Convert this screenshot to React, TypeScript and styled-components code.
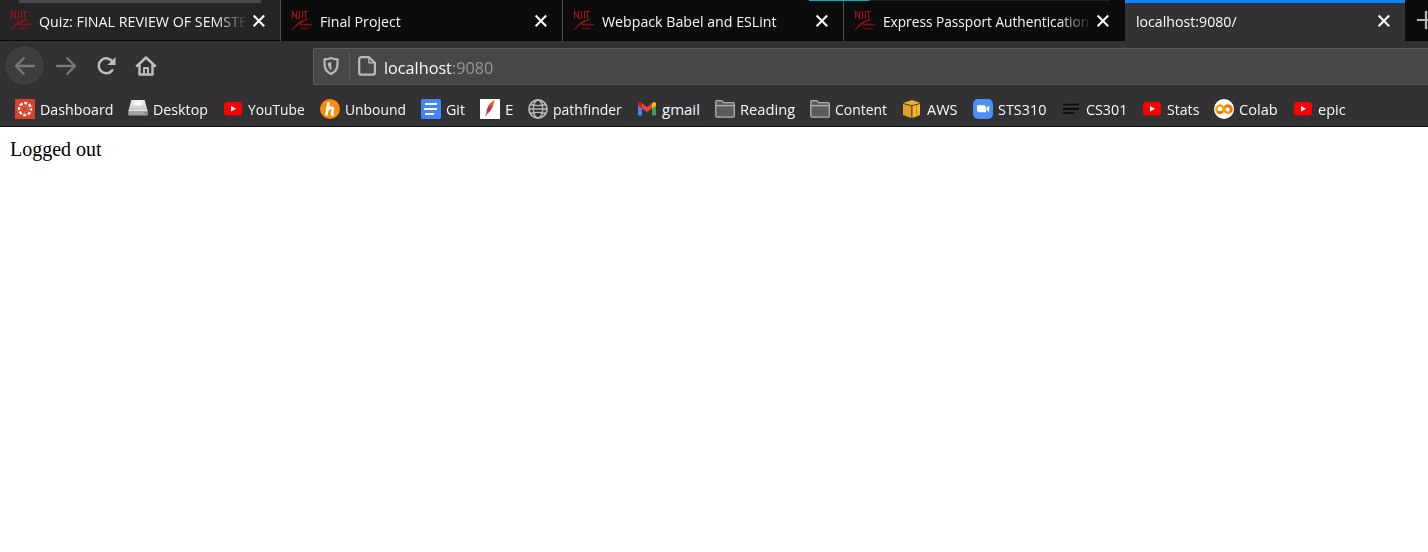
import React, { useLayoutEffect, useRef, useState } from 'react';
import styled, { createGlobalStyle } from 'styled-components';

const GlobalStyle = createGlobalStyle`
  * { box-sizing: border-box; }
  html, body { margin: 0; background: #fff; overflow: hidden; }
  svg { display: block; flex: none; }
`;

const Browser = styled.div`
  width: 1428px;
  height: 552px;
  display: flex;
  flex-direction: column;
  overflow: hidden;
  background: #fff;
  font-family: 'Open Sans', 'Noto Sans', sans-serif;
  color: #f9f9fa;
`;

const TabStrip = styled.div`
  display: flex;
  height: 41px;
  background: #0c0c0d;
`;

const Tab = styled.div<{ $state?: 'hover' | 'active'; $width: number }>`
  position: relative;
  flex: none;
  display: flex;
  align-items: center;
  width: ${p => p.$width}px;
  height: 41px;
  padding: 1px 14px 0 ${p => (p.$state === 'active' ? 11 : 10)}px;
  font-size: 15px;
  background: ${p => (p.$state === 'active' ? '#323234' : p.$state === 'hover' ? '#252526' : '#0c0c0d')};
  border-right: ${p => (p.$state === 'active' ? 'none' : '1px solid #515153')};
  box-shadow: ${p => (p.$state === 'active' ? 'none' : 'inset 0 -1px #080809')};
  &:nth-child(4) { border-right: none; padding-right: 15px; }
`;

const Accent = styled.div<{ $left: number; $width: number; $height: number; $color: string }>`
  position: absolute;
  z-index: 1;
  top: 0;
  left: ${p => p.$left}px;
  width: ${p => p.$width}px;
  height: ${p => p.$height}px;
  background: ${p => p.$color};
`;

const TabTitle = styled.div<{ $fade?: boolean }>`
  flex: 1;
  min-width: 0;
  height: 22px;
  line-height: 22px;
  margin-right: 4px;
  ${p => p.$fade && 'mask-image: linear-gradient(to left, transparent 0, #000 34px);'}
`;

const Favicon = styled.span`
  display: flex;
  width: 22px;
  margin-right: 7px;
`;

const CloseBox = styled.span`
  display: flex;
  width: 14px;
  flex: none;
`;

const NewTab = styled.div`
  flex: 1;
  min-width: 0;
  overflow: hidden;
  padding: 11px 0 0 12px;
  box-shadow: inset 0 -1px #080809;
`;

const Toolbar = styled.div`
  display: flex;
  align-items: center;
  height: 51px;
  padding: 0 0 2px 4px;
  background: #323234;
`;

const BackButton = styled.div`
  display: flex;
  align-items: center;
  justify-content: center;
  width: 41px;
  height: 41px;
  border-radius: 50%;
  background: #3e3e40;
  border: 1px solid #2d2d2f;
`;

const ToolIcon = styled.div<{ $gap: number }>`
  margin-left: ${p => p.$gap}px;
`;

const AddressBar = styled.div`
  display: flex;
  align-items: center;
  flex: 1;
  height: 37px;
  margin: 1px 0 0 156px;
  padding: 0 0 0 8px;
  background: #474749;
  border: 1px solid #5c5c5e;
  border-right: none;
  border-radius: 2px 0 0 2px;
  font-size: 16.5px;
`;

const Divider = styled.div`
  width: 1px;
  height: 26px;
  margin: 0 8px 0 9px;
  background: #5d5d68;
`;

const Address = styled.div`
  margin: 3px 0 0 8px;
  line-height: 22px;
`;

const Port = styled.span`
  color: #98989a;
`;

const Bookmarks = styled.div`
  display: flex;
  align-items: center;
  gap: 15px;
  height: 35px;
  padding: 0 0 1px 15px;
  border-bottom: 1px solid #0c0c0d;
  background: #323234;
  font-size: 15px;
`;

const Bookmark = styled.div`
  display: flex;
  align-items: center;
  gap: 5px;
  height: 20px;
  line-height: 20px;
`;

const Page = styled.main`
  flex: 1;
  padding: 11px 10px;
  background: #fff;
  color: #000;
  font: 20px/23px 'Liberation Serif', serif;
`;

const LabelBox = styled.span<{ $width: number }>`
  display: block;
  flex: none;
  width: ${p => p.$width}px;
  white-space: nowrap;
`;

const LabelText = styled.span`
  display: inline-block;
  transform-origin: 0 50%;
`;

/* Condenses a label so it occupies exactly the given advance width. */
function Label({ width, children }: { width: number; children: React.ReactNode }) {
  const ref = useRef<HTMLSpanElement>(null);
  const [scale, setScale] = useState(1);
  useLayoutEffect(() => {
    if (ref.current) setScale(width / ref.current.offsetWidth);
  }, [width]);
  return (
    <LabelBox $width={width}>
      <LabelText ref={ref} style={{ transform: `scaleX(${scale})` }}>{children}</LabelText>
    </LabelBox>
  );
}

const Njit = () => (
  <svg width="22" height="22" viewBox="0 0 22 22" fill="none" stroke="#a01218">
    <path d="M1.500 8.500V1.500L5.500 8V1M8.500 1v6c0 1.200-.7 1.500-1.700 1.500M11.500 1v7.500M14.500 1v7.500M12.500 1.500h4.500" strokeWidth="1.100" />
    <path d="M1 20C5 15 9 10 17 9.500 11 11 6 15 1 20Z" fill="#a01218" strokeWidth=".7" />
    <path d="M9 14.700h12" strokeWidth="1.700" opacity=".8" strokeDasharray="3 .4" />
    <path d="M9.500 18.500h8" strokeWidth="1.600" opacity=".75" strokeDasharray="2 .5" />
  </svg>
);

const Close = () => (
  <CloseBox>
    <svg width="14" height="14" viewBox="0 0 14 14">
      <path d="m1.600 1.600 10.600 10.600m0-10.600L1.600 12.200" stroke="#f9f9fa" strokeWidth="2.100" />
    </svg>
  </CloseBox>
);

const YouTube = () => (
  <svg width="20" height="20"><rect x="1" y="3" width="18" height="13.500" rx="3" fill="#f00" /><path d="m8 7 5 2.800L8 12.600z" fill="#fff" /></svg>
);

const Folder = () => (
  <svg width="20" height="20" fill="#5b5b5d" stroke="#b0b0b2" strokeWidth="1.300" strokeLinejoin="round">
    <path d="M.8 17V3Q.8 1.700 2 1.700h4.800l2 2H18q1.300 0 1.300 1.300v12q0 1.200-1.300 1.200H2Q.8 18.200.8 17Z" /><path d="M1 6.600h18" />
  </svg>
);

const Canvas = () => (
  <svg width="20" height="20">
    <rect width="20" height="20" fill="#d9412b" />
    <circle cx="10" cy="10" r="6" fill="none" stroke="#fff" strokeWidth="2.400" strokeDasharray="3.100 1.612" strokeDashoffset="1.550" />
    <circle cx="10" cy="10" r="3" fill="none" stroke="#fff" strokeWidth=".9" strokeDasharray=".8 1.556" opacity=".8" />
  </svg>
);

const Drive = () => (
  <svg width="20" height="20">
    <defs><linearGradient id="drive" x2="0" y2="1"><stop stopColor="#eee" /><stop offset="1" stopColor="#c4c5c4" /></linearGradient></defs>
    <path d="M3.300 1h13.400l2.800 10.500H.5z" fill="url(#drive)" />
    <path d="M.3 11h19.400v4.800q0 .8-1 .8H1.300q-1 0-1-.8z" fill="#a3a4a2" />
    <path d="M1 11.500h18" stroke="#e8e8e8" />
    <ellipse cx="10" cy="4.300" rx="4.500" ry="2.300" fill="#fafafa" />
    <circle cx="17.500" cy="14" r="1.100" fill="#3f9b3b" />
  </svg>
);

const Honey = () => (
  <svg width="20" height="20">
    <circle cx="10" cy="10" r="10" fill="#fb8b0b" />
    <path d="M8.700 3.300 6.200 16.400M7.300 11.200c2-3 5.800-3.700 5.500-.7l-.8 4.300c-.1 1 .6 1.100 1.700.2" fill="none" stroke="#fff" strokeWidth="2.700" />
  </svg>
);

const Docs = () => (
  <svg width="20" height="20"><rect width="20" height="20" rx="1.600" fill="#4285f4" /><path d="M4 5h12M3 10h13M4 15h9" stroke="#fff" strokeWidth="2.100" /></svg>
);

const Feather = () => (
  <svg width="20" height="20">
    <defs><linearGradient id="feather" x1="1" x2="0" y2="1"><stop stopColor="#f69824" /><stop offset=".5" stopColor="#cf2848" /><stop offset="1" stopColor="#8a55a6" /></linearGradient></defs>
    <rect width="20" height="20" fill="#fff" />
    <path d="M14.700 1C9.500 3.500 6.700 8.500 6.300 14l-1.500 5 2.300-4C12 11.500 13.600 6.500 14.700 1Z" fill="url(#feather)" />
  </svg>
);

const Globe = () => (
  <svg width="20" height="20" fill="none" stroke="#b8b8ba" strokeWidth="1.400">
    <circle cx="10" cy="10" r="9" strokeWidth="1.800" /><ellipse cx="10" cy="10" rx="4.700" ry="9" /><path d="M1 10h18M2.600 5.500Q10 7.700 17.400 5.500M2.600 14.500Q10 12.300 17.400 14.500" />
  </svg>
);

const Gmail = () => (
  <svg width="20" height="20">
    <path d="M1 5.500 5 8.400v8.100H2q-1 0-1-1z" fill="#4285f4" /><path d="m15 8.400 4-2.900v10q0 1-1 1h-3z" fill="#34a853" />
    <path d="M15 4.300 16.200 3.400C17.500 2.500 19 3.400 19 5v1.500l-4 3z" fill="#fbbc04" /><path d="m5 4.300 5 3.800 5-3.800v5.200l-5 3.700-5-3.700z" fill="#ea4335" /><path d="M1 5c0-1.600 1.500-2.500 2.800-1.600L5 4.300v5.200l-4-3z" fill="#c5221f" />
  </svg>
);

const Aws = () => (
  <svg width="20" height="20"><path d="M1 4 10 1l8.500 3L10 6.200z" fill="#f4ae22" /><path d="M1 4.900 9.300 7v12L1 16z" fill="#e6a024" /><path d="M10.400 7 18 4.900V16l-7.600 3z" fill="#f6b630" /><path d="m3 5.400 6.300 1.600M9.900 6.500V19M14.600 6v10" stroke="#8f681d" strokeWidth=".6" /></svg>
);

const Zoom = () => (
  <svg width="20" height="20"><rect width="20" height="20" rx="5" fill="#4a90f5" /><path d="M4 6.300h7q2 0 2 2v5H6q-2 0-2-2zM13.600 8.700 16.200 6.700v6.200l-2.600-2z" fill="#fff" /></svg>
);

const Lines = () => (
  <svg width="20" height="20"><path d="M2 5.500h16M2 9.800h16M2 14h11" stroke="#090909" strokeWidth="1.700" /></svg>
);

const Colab = () => (
  <svg width="20" height="20" fill="none" strokeWidth="2.500"><circle cx="10" cy="10" r="10" fill="#fff" /><circle cx="6" cy="10.200" r="3.600" stroke="#f9ab00" /><circle cx="14" cy="10.200" r="3.600" stroke="#f29b12" /><path d="M3.500 12.700A3.600 3.600 0 0 0 8.500 12.700M11.500 7.700A3.600 3.600 0 0 1 16.500 12.700" stroke="#e8710a" /></svg>
);

const bookmarks: [string, number, React.ComponentType][] = [
  ['Dashboard', 73, Canvas], ['Desktop', 55, Drive], ['YouTube', 57, YouTube], ['Unbound', 61, Honey],
  ['Git', 19, Docs], ['E', 8, Feather], ['pathfinder', 69, Globe], ['gmail', 38, Gmail],
  ['Reading', 55, Folder], ['Content', 52, Folder], ['AWS', 31, Aws], ['STS310', 48, Zoom],
  ['CS301', 41, Lines], ['Stats', 32, YouTube], ['Colab', 39, Colab], ['epic', 28, YouTube],
];

export default function App() {
  return (
    <Browser>
      <GlobalStyle />
      <TabStrip>
        <Tab $width={281} $state="hover">
          <Accent $left={19} $width={242} $height={3} $color="#4a4a4b" />
          <Favicon><Njit /></Favicon>
          <TabTitle $fade><Label width={208}>Quiz: FINAL REVIEW OF SEMSTE</Label></TabTitle>
          <Close />
        </Tab>
        <Tab $width={282}>
          <Favicon><Njit /></Favicon>
          <TabTitle><Label width={81}>Final Project</Label></TabTitle>
          <Close />
        </Tab>
        <Tab $width={281}>
          <Favicon><Njit /></Favicon>
          <TabTitle><Label width={175}>Webpack Babel and ESLint</Label></TabTitle>
          <Close />
          <Accent $left={246} $width={60} $height={1} $color="#00b3c4" />
        </Tab>
        <Tab $width={281}>
          <Accent $left={25} $width={241} $height={1} $color="#222223" />
          <Favicon><Njit /></Favicon>
          <TabTitle $fade><Label width={206}>Express Passport Authentication</Label></TabTitle>
          <Close />
        </Tab>
        <Tab $width={280} $state="active">
          <Accent $left={0} $width={280} $height={3} $color="#0a84ff" />
          <TabTitle><Label width={101}>localhost:9080/</Label></TabTitle>
          <Close />
        </Tab>
        <NewTab>
          <svg width="18" height="18"><path d="M0 9h18M9 0v18" stroke="#b5b5b7" strokeWidth="2.200" /></svg>
        </NewTab>
      </TabStrip>
      <Toolbar>
        <BackButton>
          <svg width="22" height="20" fill="none" stroke="#78787a" strokeWidth="2.300" strokeLinecap="round" strokeLinejoin="round"><path d="M20 10H2M9.700 2.200 2 10l7.700 7.800" /></svg>
        </BackButton>
        <ToolIcon $gap={10}>
          <svg width="22" height="20" fill="none" stroke="#78787a" strokeWidth="2.300" strokeLinecap="round" strokeLinejoin="round"><path d="M2 10h18M12.300 2.200 20 10l-7.700 7.800" /></svg>
        </ToolIcon>
        <ToolIcon $gap={19}>
          <svg width="22" height="20" fill="none" stroke="#bdbdbf" strokeWidth="2.500" strokeLinecap="round"><path d="M16.300 14.200A7.500 7.500 0 1 1 16.700 6" /><path d="M19.500 1v8h-8z" fill="#bdbdbf" stroke="none" /></svg>
        </ToolIcon>
        <ToolIcon $gap={17}>
          <svg width="22" height="20" fill="none" stroke="#bdbdbf" strokeWidth="2.500" strokeLinecap="round" strokeLinejoin="round"><path d="M2 10 11 1.500 20 10M4.500 9v9.500h13V9" /><path d="M9 18v-6h4v6" strokeWidth="2" /></svg>
        </ToolIcon>
        <AddressBar>
          <svg width="18" height="20" fill="none" stroke="#b9b9bb" strokeWidth="2.200" strokeLinejoin="round"><path d="M9 2Q12 3.300 15.500 3.300V8q0 7-6.500 10Q2.500 15 2.500 8V3.300Q6 3.300 9 2Z" /><path d="M9.300 6v8.500Q5.900 12 5.900 7z" fill="#b9b9bb" stroke="none" /></svg>
          <Divider />
          <svg width="18" height="20" fill="none" stroke="#b9b9bb" strokeWidth="2.200" strokeLinejoin="round"><path d="M3.500 1.200H11l5.900 5.700v9.600q0 2.200-2.200 2.200H3.400q-2.200 0-2.200-2.200v-13q0-2.300 2.300-2.300Z" /><path d="M11 1.500v5.300h5.500" strokeWidth="1.500" /></svg>
          <Address><Label width={109}>localhost<Port>:9080</Port></Label></Address>
        </AddressBar>
      </Toolbar>
      <Bookmarks>
        {bookmarks.map(([name, width, Icon]) => (
          <Bookmark key={name}><Icon /><Label width={width}>{name}</Label></Bookmark>
        ))}
      </Bookmarks>
      <Page>Logged out</Page>
    </Browser>
  );
}
